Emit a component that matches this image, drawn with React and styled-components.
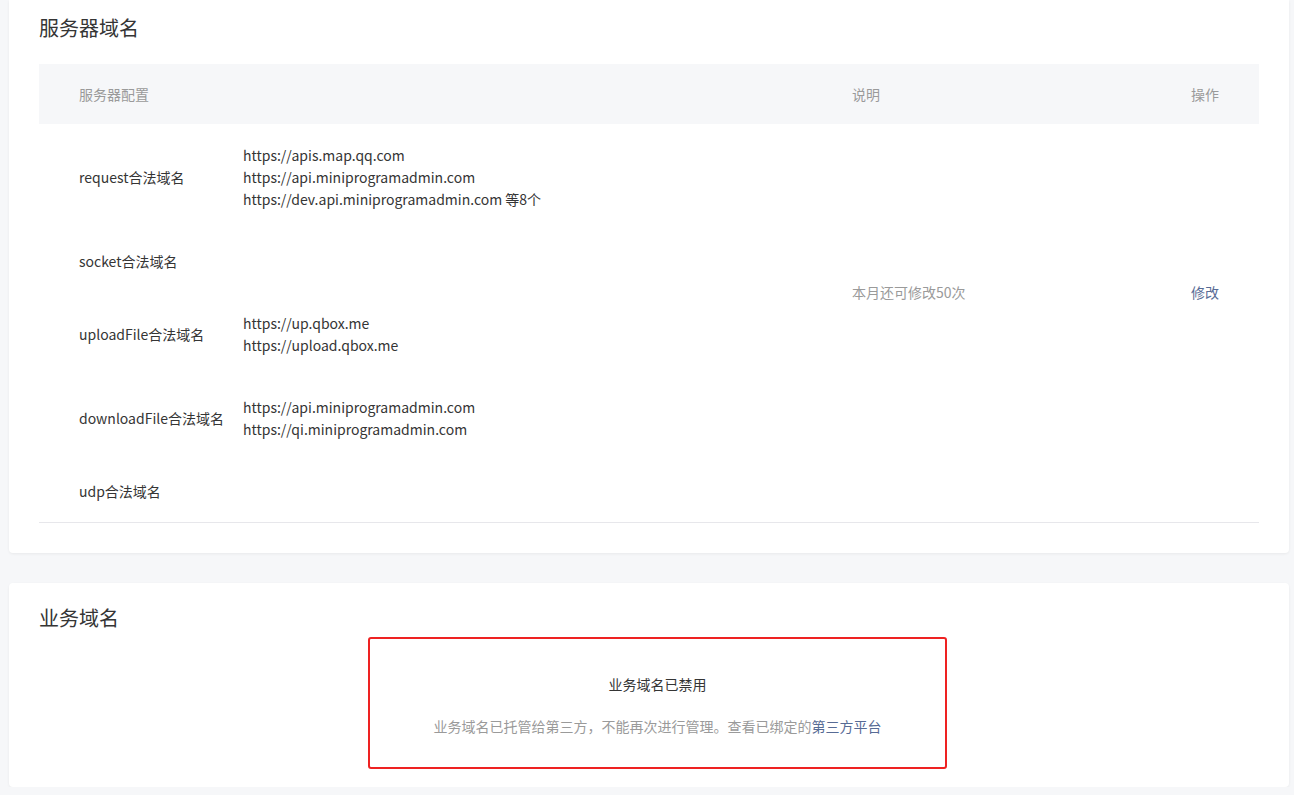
import React from "react";
import styled, { createGlobalStyle } from "styled-components";

const Global = createGlobalStyle`
  html, body { margin: 0; background: #f6f7f9; }
  body { font-family: "Noto Sans CJK SC", "Liberation Sans", sans-serif; font-size: 14px; color: #353535; }
`;
const Page = styled.div`
  padding: 0 5px 0 9px;
  display: flex; flex-direction: column; gap: 30px;
`;
const Card = styled.section`
  background: #fff;
  border-radius: ${p => (p.$first ? "0 0 4px 4px" : "4px")};
  box-shadow: 0 1px 3px rgba(0,0,0,0.06);
  padding: ${p => (p.$first ? "16px 30px 30px" : "23px 30px 18px")};
`;
const Title = styled.h2`
  margin: 0 0 ${p => p.$mb}px;
  font-size: 20px; line-height: 24px; font-weight: 400; color: #353535;
`;
const Table = styled.table`
  width: 100%; border-collapse: collapse;
  border-bottom: 1px solid #e7e7eb;
`;
const Th = styled.th`
  background: #f6f7f9; height: 60px; padding: 0;
  font-weight: 400; color: #9a9a9a; text-align: ${p => p.$right ? "right" : "left"};
  padding-left: ${p => p.$pl || 0}px; padding-right: ${p => p.$pr || 0}px;
`;
const Td = styled.td`
  padding: 20px 0; vertical-align: middle; line-height: 22px;
  padding-left: ${p => p.$pl || 0}px; padding-right: ${p => p.$pr || 0}px;
  text-align: ${p => p.$right ? "right" : "left"};
  color: ${p => p.$muted ? "#9a9a9a" : "#353535"};
`;
const Link = styled.a`color: #576b95; text-decoration: none;`;
const Notice = styled.div`
  width: 575px; margin-left: 329px; border: 2px solid #ee2222; border-radius: 3px;
  text-align: center; padding: 34px 0 30px;
`;
const NTitle = styled.div`color: #353535; line-height: 22px;`;
const NDesc = styled.div`color: #9a9a9a; line-height: 22px; margin-top: 20px;`;

const rows = [
  ["request合法域名", ["https://apis.map.qq.com", "https://api.miniprogramadmin.com", "https://dev.api.miniprogramadmin.com 等8个"]],
  ["socket合法域名", []],
  ["uploadFile合法域名", ["https://up.qbox.me", "https://upload.qbox.me"]],
  ["downloadFile合法域名", ["https://api.miniprogramadmin.com", "https://qi.miniprogramadmin.com"]],
  ["udp合法域名", []],
];

export default function App() {
  return (
    <>
      <Global />
      <Page>
        <Card $first>
          <Title $mb={24}>服务器域名</Title>
          <Table>
            <colgroup>
              <col style={{ width: 204 }} />
              <col style={{ width: 609 }} />
              <col style={{ width: 300 }} />
              <col />
            </colgroup>
            <thead>
              <tr>
                <Th $pl={40} colSpan={2}>服务器配置</Th>
                <Th>说明</Th>
                <Th $right $pr={40}>操作</Th>
              </tr>
            </thead>
            <tbody>
              {rows.map(([label, doms], i) => (
                <tr key={label}>
                  <Td $pl={40}>{label}</Td>
                  <Td>{doms.length ? doms.map(d => <div key={d}>{d}</div>) : null}</Td>
                  {i === 0 && <Td $muted rowSpan={4}>本月还可修改50次</Td>}
                  {i === 0 && <Td $right $pr={40} rowSpan={4}><Link href="#">修改</Link></Td>}
                  {i === 4 && <Td colSpan={2} />}
                </tr>
              ))}
            </tbody>
          </Table>
        </Card>
        <Card>
          <Title $mb={7}>业务域名</Title>
          <Notice>
            <NTitle>业务域名已禁用</NTitle>
            <NDesc>业务域名已托管给第三方，不能再次进行管理。查看已绑定的<Link href="#">第三方平台</Link></NDesc>
          </Notice>
        </Card>
      </Page>
    </>
  );
}
